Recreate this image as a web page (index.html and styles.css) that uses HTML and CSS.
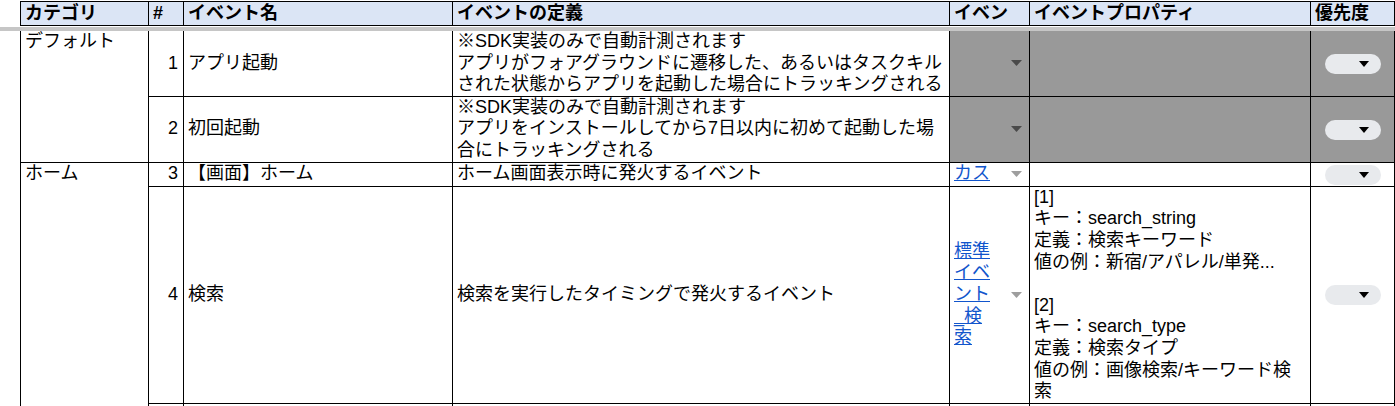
FILE: index.html
```html
<!DOCTYPE html>
<html lang="ja">
<head>
<meta charset="utf-8">
<title>イベント定義</title>
<link rel="stylesheet" href="styles.css">
</head>
<body>
<div class="sheet">
  <table class="grid head">
    <colgroup>
      <col class="w-cat"><col class="w-num"><col class="w-name"><col class="w-def"><col class="w-type"><col class="w-prop"><col class="w-pri">
    </colgroup>
    <tr>
      <th>カテゴリ</th><th>#</th><th>イベント名</th><th>イベントの定義</th><th>イベン</th><th>イベントプロパティ</th><th>優先度</th>
    </tr>
  </table>
  <div class="freeze"></div>
  <table class="grid body">
    <colgroup>
      <col class="w-cat"><col class="w-num"><col class="w-name"><col class="w-def"><col class="w-type"><col class="w-prop"><col class="w-pri">
    </colgroup>
    <tr class="r1">
      <td class="cat" rowspan="2">デフォルト</td>
      <td class="num">1</td>
      <td class="txt">アプリ起動</td>
      <td class="txt">※SDK実装のみで自動計測されます<br>アプリがフォアグラウンドに遷移した、あるいはタスクキル<br>された状態からアプリを起動した場合にトラッキングされる</td>
      <td class="evt off"><div class="evt-wrap"><span class="evt-link"></span><svg class="arr" width="11" height="6" viewBox="0 0 11 6"><polygon points="0,0 11,0 5.5,6"/></svg></div></td>
      <td class="off"></td>
      <td class="pri off"><div class="chip"><svg width="10" height="6" viewBox="0 0 10 6"><polygon points="0,0 10,0 5,6"/></svg></div></td>
    </tr>
    <tr class="r2">
      <td class="num">2</td>
      <td class="txt">初回起動</td>
      <td class="txt">※SDK実装のみで自動計測されます<br>アプリをインストールしてから7日以内に初めて起動した場<br>合にトラッキングされる</td>
      <td class="evt off"><div class="evt-wrap"><span class="evt-link"></span><svg class="arr" width="11" height="6" viewBox="0 0 11 6"><polygon points="0,0 11,0 5.5,6"/></svg></div></td>
      <td class="off"></td>
      <td class="pri off"><div class="chip"><svg width="10" height="6" viewBox="0 0 10 6"><polygon points="0,0 10,0 5,6"/></svg></div></td>
    </tr>
    <tr class="r3">
      <td class="cat" rowspan="3">ホーム</td>
      <td class="num">3</td>
      <td class="txt">【画面】ホーム</td>
      <td class="txt">ホーム画面表示時に発火するイベント</td>
      <td class="evt"><div class="evt-wrap"><a class="evt-link" href="#">カス</a><svg class="arr" width="11" height="6" viewBox="0 0 11 6"><polygon points="0,0 11,0 5.5,6"/></svg></div></td>
      <td class="txt"></td>
      <td class="pri"><div class="chip"><svg width="10" height="6" viewBox="0 0 10 6"><polygon points="0,0 10,0 5,6"/></svg></div></td>
    </tr>
    <tr class="r4">
      <td class="num">4</td>
      <td class="txt">検索</td>
      <td class="txt">検索を実行したタイミングで発火するイベント</td>
      <td class="evt"><div class="evt-wrap"><a class="evt-link wrap" href="#">標準イベント_検索</a><svg class="arr" width="11" height="6" viewBox="0 0 11 6"><polygon points="0,0 11,0 5.5,6"/></svg></div></td>
      <td class="txt">[1]<br>キー：search_string<br>定義：検索キーワード<br>値の例：新宿/アパレル/単発...<br><br>[2]<br>キー：search_type<br>定義：検索タイプ<br>値の例：画像検索/キーワード検<br>索</td>
      <td class="pri"><div class="chip"><svg width="10" height="6" viewBox="0 0 10 6"><polygon points="0,0 10,0 5,6"/></svg></div></td>
    </tr>
    <tr class="r5">
      <td class="num"></td>
      <td class="txt"></td>
      <td class="txt"></td>
      <td class="evt"></td>
      <td class="txt"></td>
      <td class="pri"></td>
    </tr>
  </table>
</div>
</body>
</html>
```
FILE: styles.css
```css
html, body {
  margin: 0;
  padding: 0;
  background: #ffffff;
}
body {
  font-family: "Liberation Sans", "Noto Sans CJK JP", sans-serif;
  font-size: 18px;
  color: #000000;
  overflow: hidden;
}
.sheet {
  padding-top: 1px;
}
.grid {
  border-collapse: collapse;
  table-layout: fixed;
  width: 1375px;
  margin-left: 20px;
}
.w-cat { width: 128px; }
.w-num { width: 35px; }
.w-name { width: 269px; }
.w-def { width: 497px; }
.w-type { width: 80px; }
.w-prop { width: 281px; }
.w-pri { width: 84px; }

.grid th,
.grid td {
  border: 1px solid #000000;
  padding: 0 4px;
  line-height: 21.6px;
  overflow: hidden;
  white-space: nowrap;
}
.head th {
  background: #dbe5f5;
  font-weight: bold;
  text-align: left;
  height: 23px;
  line-height: 23px;
  vertical-align: middle;
}
.freeze {
  height: 4px;
  margin-top: 1px;
  background: #c6c6c6;
}
.body tr:first-child td {
  border-top: 0;
}
.r1 td { height: 64px; }
.r2 td { height: 65px; }
.r3 td { height: 23px; }
.r4 td { height: 216px; }
.r5 td { height: 30px; }

.body td {
  vertical-align: middle;
}
.body td.cat {
  vertical-align: top;
}
.body td.num {
  text-align: right;
  padding-right: 5px;
}
.off {
  background: #999999;
}
.evt-wrap {
  display: flex;
  align-items: center;
  justify-content: space-between;
  padding-right: 3px;
}
.evt-link {
  display: block;
  width: 37px;
  color: #1155cc;
  text-decoration: underline;
  white-space: normal;
}
.evt-link.wrap {
  word-break: break-all;
}
.arr {
  fill: #9e9e9e;
  flex: none;
}
.off .arr {
  fill: #4a4a4a;
}
.pri {
  text-align: center;
}
.chip {
  display: inline-flex;
  align-items: center;
  justify-content: flex-end;
  width: 56px;
  height: 20px;
  border-radius: 10px;
  background: #e8eaed;
  box-sizing: border-box;
  padding-right: 12px;
  vertical-align: middle;
}
.chip svg {
  fill: #000000;
}
```
